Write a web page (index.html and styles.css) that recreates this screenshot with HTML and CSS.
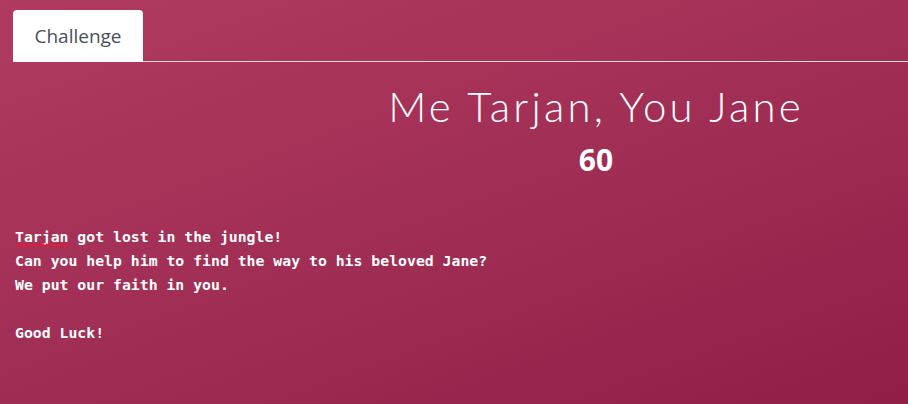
FILE: index.html
```html
<!DOCTYPE html>
<html>
<head>
<meta charset="utf-8">
<link rel="stylesheet" href="styles.css">
</head>
<body>
<div class="page">
  <ul class="tabs">
    <li class="tab active">Challenge</li>
  </ul>
  <div class="head">
    <div class="spacer"></div>
    <div class="titles">
      <h1 class="title">Me Tarjan, You Jane</h1>
      <div class="points">60</div>
    </div>
  </div>
  <div class="desc">
    <div class="line"><span class="typo">Tarjan<svg class="wave" width="54" height="4" viewBox="0 0 54 4"><path d="M0 3 L1.5 1 L3 3 L4.5 1 L6 3 L7.5 1 L9 3 L10.5 1 L12 3 L13.5 1 L15 3 L16.5 1 L18 3 L19.5 1 L21 3 L22.5 1 L24 3 L25.5 1 L27 3 L28.5 1 L30 3 L31.5 1 L33 3 L34.5 1 L36 3 L37.5 1 L39 3 L40.5 1 L42 3 L43.5 1 L45 3 L46.5 1 L48 3 L49.5 1 L51 3 L52.5 1 L54 3" fill="none" stroke="#e81c2c" stroke-width="1.2"/></svg></span> got lost in the jungle!</div>
    <div class="line">Can you help him to find the way to his beloved Jane?</div>
    <div class="line">We put our faith in you.</div>
    <div class="line">&nbsp;</div>
    <div class="line">Good Luck!</div>
  </div>
</div>
</body>
</html>
```
FILE: styles.css
```css
html, body {
  margin: 0;
  height: 100%;
}
body {
  background: linear-gradient(160deg, #b13b60 0%, #a12e55 50%, #8f1f47 100%);
  color: #fff;
  font-family: "Open Sans", sans-serif;
}
.page {
  padding: 10px 0 0 13px;
}
.tabs {
  list-style: none;
  margin: 0;
  padding: 0;
  display: flex;
  border-bottom: 1px solid #dcdcdc;
}
.tab {
  width: 130px;
  height: 52px;
  box-sizing: border-box;
  margin-bottom: -1px;
  background: #fff;
  border-radius: 4px 4px 0 0;
  color: #495057;
  font-size: 19px;
  display: flex;
  align-items: center;
  justify-content: center;
}
.head {
  display: flex;
}
.spacer {
  width: 365px;
}
.titles {
  width: 436px;
  text-align: center;
}
.title {
  margin: 19px 0 0;
  font-family: "Lato", sans-serif;
  font-weight: 300;
  font-size: 42px;
  letter-spacing: 3.2px;
  line-height: 50px;
}
.points {
  margin-top: 9px;
  font-weight: 700;
  font-size: 30px;
  line-height: 40px;
}
.desc {
  margin: 45px 0 0 2px;
  font-family: "DejaVu Sans Mono", monospace;
  font-weight: 700;
  font-size: 14.8px;
  line-height: 24px;
  color: #fff;
}
.line {
  white-space: pre;
  height: 24px;
}
.typo {
  position: relative;
  display: inline-block;
  line-height: 18px;
}
.wave {
  position: absolute;
  left: 0;
  top: 15px;
  display: block;
}
```
